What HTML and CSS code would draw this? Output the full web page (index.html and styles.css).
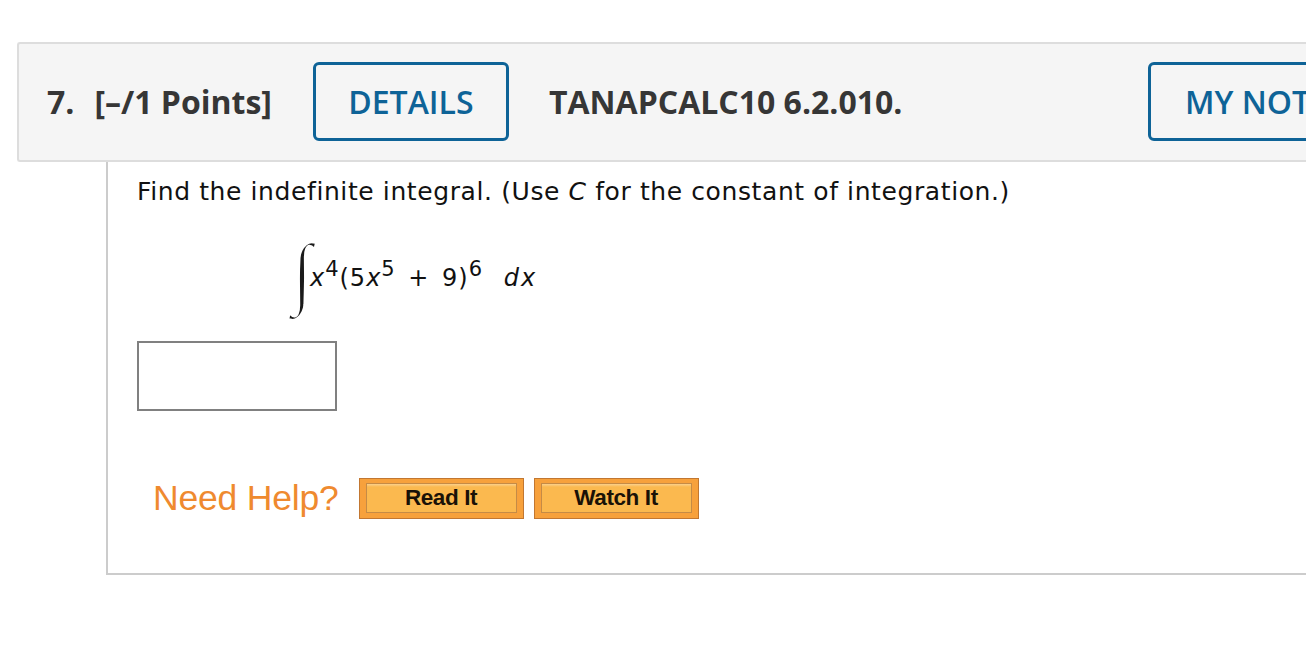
FILE: index.html
```html
<!DOCTYPE html>
<html>
<head>
<meta charset="utf-8">
<link rel="stylesheet" href="styles.css">
</head>
<body>
<div class="page">
  <div class="qhead">
    <span class="qnum">7.</span>
    <span class="qpts">[–/1 Points]</span>
    <span class="btn-outline">DETAILS</span>
    <span class="qcode">TANAPCALC10 6.2.010.</span>
    <span class="btn-outline notes">MY NOTES</span>
  </div>
  <div class="qbody">
    <p class="prompt">Find the indefinite integral. (Use <i>C</i> for the constant of integration.)</p>
    <div class="math">
      <span class="integral">∫</span>
      <span class="expr"><i>x</i><sup>4</sup>(5<i>x</i><sup>5</sup> + 9)<sup>6</sup> <i class="dx">dx</i></span>
    </div>
    <div class="answer"></div>
    <div class="help">
      <span class="help-label">Need Help?</span>
      <span class="hbtn"><span class="hbtn-in">Read It</span></span>
      <span class="hbtn"><span class="hbtn-in">Watch It</span></span>
    </div>
  </div>
</div>
</body>
</html>
```
FILE: styles.css
```css
html, body {
  margin: 0;
  padding: 0;
  background: #ffffff;
  overflow: hidden;
}
.page {
  width: 1500px;
  padding: 42px 0 0 17px;
}
.qhead {
  display: flex;
  align-items: center;
  height: 79px;
  padding: 18px 0 19px 28px;
  background: #f5f5f5;
  border: 2px solid #dddddd;
  border-right: none;
  border-radius: 3px 0 0 3px;
  font-family: "Open Sans", sans-serif;
  font-weight: 700;
  font-size: 32px;
  color: #363636;
}
.qnum {
  margin-right: 20px;
}
.qpts {
  margin-right: 41px;
}
.btn-outline {
  box-sizing: border-box;
  display: flex;
  align-items: center;
  justify-content: center;
  height: 79px;
  width: 196px;
  border: 3px solid #0e6397;
  border-radius: 6px;
  color: #0e6397;
  font-weight: 600;
  font-size: 32px;
  margin-right: 40px;
}
.qcode {
  width: 599px;
}
.notes {
  width: 220px;
  justify-content: flex-start;
  padding-left: 34px;
}
.qbody {
  margin-left: 89px;
  height: 396px;
  border-left: 2px solid #cccccc;
  border-bottom: 2px solid #cccccc;
  padding: 15px 0 0 29px;
  font-family: "DejaVu Sans", Verdana, sans-serif;
  color: #111111;
}
.prompt {
  margin: 0;
  font-size: 25px;
  line-height: 30px;
  letter-spacing: 0.6px;
}
.math {
  display: flex;
  align-items: center;
  margin: 32px 0 0 154px;
  height: 78px;
}
.integral {
  font-family: "Liberation Serif", serif;
  font-style: italic;
  font-size: 80px;
  line-height: 78px;
  color: #1a1a1a;
  -webkit-text-stroke: 2.5px #ffffff;
  transform: translateY(-6px) scaleX(0.92);
  margin-right: -3px;
}
.expr {
  font-size: 24px;
  line-height: 30px;
  letter-spacing: 1px;
  word-spacing: 4px;
}
.expr sup {
  font-size: 21px;
  vertical-align: 10px;
  line-height: 0;
}
.dx {
  margin-left: 8px;
  letter-spacing: 2px;
}
.answer {
  width: 196px;
  height: 66px;
  border: 2px solid #808080;
  margin-top: 24px;
}
.help {
  display: flex;
  align-items: center;
  margin-top: 67px;
  padding-left: 16px;
}
.help-label {
  font-family: "Liberation Sans", Arial, sans-serif;
  font-size: 35.5px;
  color: #ef8a2f;
  margin-right: 20px;
  letter-spacing: -0.2px;
}
.hbtn {
  box-sizing: border-box;
  display: block;
  width: 165px;
  height: 41px;
  padding: 4px 6px 5px 6px;
  margin-right: 10px;
  background: #f7a13c;
  border: 1px solid #c27731;
}
.hbtn-in {
  box-sizing: border-box;
  display: flex;
  align-items: center;
  justify-content: center;
  height: 100%;
  border: 1px solid #c58b46;
  background: linear-gradient(#fbd08c 0, #fbb94f 3px, #fbb94f 100%);
  font-family: "Liberation Sans", Arial, sans-serif;
  font-weight: 700;
  font-size: 22.5px;
  letter-spacing: -0.4px;
  color: #1a1207;
}
```
